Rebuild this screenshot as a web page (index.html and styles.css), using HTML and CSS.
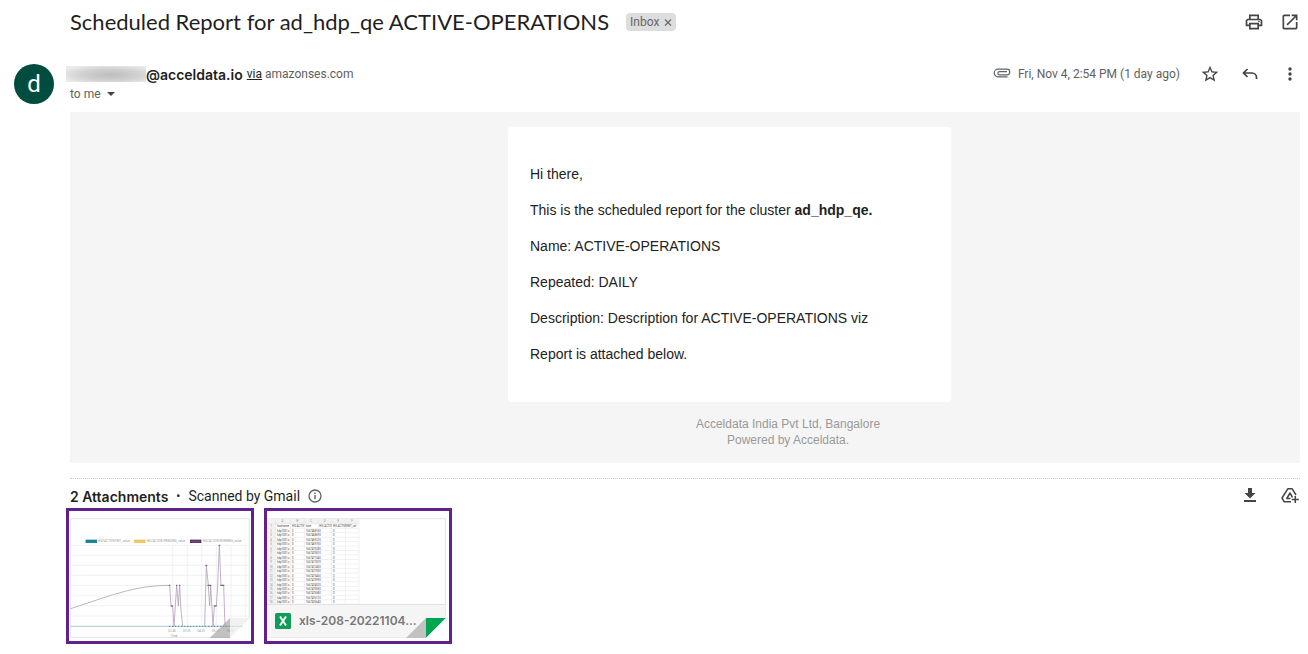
FILE: index.html
```html
<!DOCTYPE html>
<html lang="en">
<head>
    <meta charset="UTF-8">
    <meta name="viewport" content="width=device-width, initial-scale=1.0">
    <title>Scheduled Report for ad_hdp_qe ACTIVE-OPERATIONS</title>
    <link rel="stylesheet" href="styles.css">
</head>
<body>
    <main class="mail">
        <!-- Subject line -->
        <div class="subject-row">
            <h1 class="subject">Scheduled Report for ad_hdp_qe ACTIVE-OPERATIONS</h1>
            <span class="chip">Inbox
                <button class="chip-remove" aria-label="Remove label Inbox">
                    <svg width="8" height="8" viewBox="0 0 8 8"><path d="M1 1.500l6 6M7 1.500l-6 6" stroke="#666" stroke-width="1.100" fill="none"/></svg>
                </button>
            </span>
            <div class="actions subject-actions">
                <button class="icon-button" aria-label="Print all">
                    <svg width="20" height="20" viewBox="0 0 24 24"><path d="M19 8h-1V3H6v5H5c-1.660 0-3 1.340-3 3v6h4v4h12v-4h4v-6c0-1.660-1.340-3-3-3zM8 5h8v3H8V5zm8 14H8v-4h8v4zm4-4h-2v-2H6v2H4v-4c0-.550.450-1 1-1h14c.550 0 1 .450 1 1v4z"/><circle cx="18" cy="11.500" r="1"/></svg>
                </button>
                <button class="icon-button" aria-label="In new window">
                    <svg width="20" height="20" viewBox="0 0 24 24"><path d="M19 19H5V5h7V3H5c-1.110 0-2 .900-2 2v14c0 1.100.890 2 2 2h14c1.100 0 2-.900 2-2v-7h-2v7zM14 3v2h3.590l-9.830 9.830 1.410 1.410L19 6.410V10h2V3h-7z"/></svg>
                </button>
            </div>
        </div>

        <!-- Sender and date -->
        <header class="sender-row">
            <div class="avatar">d</div>
            <div class="sender">
                <div class="sender-line">
                    <span class="redacted"></span><strong class="address">@acceldata.io</strong>
                    <span class="via"><a href="#">via</a> amazonses.com</span>
                </div>
                <button class="recipient">to me
                    <svg width="8" height="4" viewBox="0 0 8 4"><path d="M0 0h8L4 4z"/></svg>
                </button>
            </div>
            <div class="date-box">
                <svg width="18" height="18" viewBox="0 0 18 18" fill="none" stroke="#5f6368" stroke-width="1.200"><path d="M14.500 11.800H5A3.800 3.800 0 0 1 5 4.200h9a2.700 2.700 0 0 1 0 5.600H6.500a1.600 1.600 0 0 1 0-3.200H14"/></svg>
                <span>Fri, Nov 4, 2:54 PM (1 day ago)</span>
            </div>
            <div class="actions sender-actions">
                <button class="icon-button" aria-label="Star">
                    <svg width="20" height="20" viewBox="0 0 24 24"><path d="M22 9.240l-7.190-.620L12 2 9.190 8.630 2 9.240l5.460 4.730L5.820 21 12 17.270 18.180 21l-1.630-7.030L22 9.240zM12 15.400l-3.760 2.270 1-4.280-3.320-2.880 4.380-.380L12 6.100l1.710 4.040 4.380.380-3.320 2.880 1 4.280L12 15.400z"/></svg>
                </button>
                <button class="icon-button" aria-label="Reply">
                    <svg width="20" height="20" viewBox="0 0 20 20" fill="none" stroke="#444" stroke-width="1.700"><path d="M7.500 5L3.500 9l4 4M3.500 9H12a4.500 4.500 0 0 1 4.500 4.500V15"/></svg>
                </button>
                <button class="icon-button" aria-label="More">
                    <svg width="20" height="20" viewBox="0 0 20 20"><circle cx="10" cy="5" r="1.700"/><circle cx="10" cy="10" r="1.700"/><circle cx="10" cy="15" r="1.700"/></svg>
                </button>
            </div>
        </header>

        <!-- Message -->
        <section class="message">
            <div class="card">
                <p>Hi there,</p>
                <p>This is the scheduled report for the cluster <b>ad_hdp_qe.</b></p>
                <p>Name: ACTIVE-OPERATIONS</p>
                <p>Repeated: DAILY</p>
                <p>Description: Description for ACTIVE-OPERATIONS viz</p>
                <p>Report is attached below.</p>
            </div>
            <footer class="message-footer">Acceldata India Pvt Ltd, Bangalore<br>Powered by Acceldata.</footer>
        </section>

        <!-- Attachments -->
        <section class="attachments">
            <div class="attachments-head">
                <h2>2 Attachments</h2>
                <span class="dot">•</span>
                <span>Scanned by Gmail</span>
                <svg class="info" width="14" height="14" viewBox="0 0 14 14"><circle cx="7" cy="7" r="6" fill="none" stroke="#5f6368" stroke-width="1.300"/><path d="M6.300 6h1.400v4.200H6.300zM6.300 3.600h1.400V5H6.300z" fill="#5f6368"/></svg>
                <div class="actions sender-actions">
                    <button class="icon-button" aria-label="Download all attachments">
                        <svg width="20" height="20" viewBox="0 0 20 20"><path d="M8 2h4v5h3.500L10 12.500 4.500 7H8zM4 14h12v2H4z"/></svg>
                    </button>
                    <button class="icon-button" aria-label="Add all to Drive">
                        <svg width="20" height="20" viewBox="0 0 20 20" fill="none" stroke="#444" stroke-width="1.500" stroke-linejoin="round"><path d="M11 15.800H4.200L2 12 7.800 2.800h4.400L16 9M10.500 12.500H6.800L10 7l2.500 4.300M15.300 10v7M11.800 13.500h7"/></svg>
                    </button>
                </div>
            </div>
            <div class="tiles">
                <a class="tile" href="#" aria-label="Chart attachment">
                    <svg class="preview" viewBox="15 18 546 390">
                        <rect x="20" y="41" width="536" height="356" fill="#fff" stroke="#e3e3e3" stroke-width="3"/>
                        <path d="M20 121H556M20 151H556M20 181H556M20 211H556M20 241H556M20 272H556M20 302H556M20 333H556M326 121V370M370 121V370M413 121V370M457 121V370M501 121V370M545 121V370" stroke="#ececf0" stroke-width="2"/>
                        <rect x="66" y="105" width="32" height="8" fill="#1687a0" stroke="#08758f" stroke-width="2"/>
                        <rect x="211" y="105" width="32" height="8" fill="#f4c568" stroke="#edbb58" stroke-width="2"/>
                        <rect x="379" y="105" width="32" height="8" fill="#74477b" stroke="#42164d" stroke-width="2"/>
                        <g class="chart-text">
                            <text x="103" y="112">HSI/ACTIVE/INIT_value</text>
                            <text x="248" y="112">HSI/ACTIVE/PENDING_value</text>
                            <text x="416" y="112">HSI/ACTIVE/RUNNING_value</text>
                            <text x="313" y="381">02:45</text><text x="357" y="381">03:35</text>
                            <text x="400" y="381">04:25</text><text x="444" y="381">05:15</text>
                            <text x="488" y="381">06:05</text><text x="320" y="397">Time</text>
                        </g>
                        <path d="M20 311L110 281Q190 254 245 246Q280 241 317 241L321 303H326L330 364L338 241L343 303L347 241L350 303L356 364M422 364L427 181L433 241L437 303L440 241L447 364L451 303H457L461 241L466 121L471 241H479L483 364" fill="none" stroke="#b5a1b9" stroke-width="2.500"/>
                        <path d="M315 241h4M320 303h7M336 241h4M345 241h4M424 181h6M430 241h12M449 303h9M469 241h12M464 121h5" stroke="#685070" stroke-width="3"/>
                        <path d="M20 364H540" stroke="#7fb5bd" stroke-width="2"/>
                        <path d="M315 364H540" stroke="#5b8590" stroke-width="3" stroke-dasharray="4 5"/>
                        <path d="M437 399L498 339V399z" fill="#999" opacity=".6"/>
                        <path d="M498 339H558L498 399z" fill="#eee" opacity=".75"/>
                        <path d="M558 340V400H498z" fill="#fff"/>
                    </svg>
                </a>
                <a class="tile" href="#">
                    <svg class="preview" viewBox="21 18 546 390">
                        <rect x="22" y="41" width="534" height="356" fill="#fff" stroke="#e3e3e3" stroke-width="3"/>
                        <rect x="21" y="41" width="276" height="16" fill="#f2f2f2"/>
                        <rect x="21" y="41" width="26" height="257" fill="#f2f2f2"/>
                        <g id="sheet" class="sheet-text"></g>
                        <rect x="21" y="298" width="535" height="99" fill="#f5f5f5"/>
                        <path d="M21 298H556" stroke="#dedede" stroke-width="3"/>
                    </svg>
                    <span class="file">
                        <svg width="16" height="16" viewBox="0 0 16 16"><rect width="16" height="16" rx="1.500" fill="#0f9d58"/><path d="M5 3.500l6 9M11 3.500l-6 9" stroke="#fff" stroke-width="1.900"/></svg>
                        <span class="file-name">xls-208-20221104...</span>
                    </span>
                    <svg class="fold" width="40" height="20" viewBox="0 0 40 20"><path d="M0 20L20 0V20z" fill="#c2c2c2"/><path d="M20 0H40L20 20z" fill="#00a651"/><path d="M40 0V20H20z" fill="#fff"/></svg>
                </a>
            </div>
        </section>
    </main>

    <script>
        // Fill in the spreadsheet preview
        const columns = [47, 92, 133, 174, 215, 256, 297];
        let cells = '';
        let lines = '';
        for (let c = 0; c < 6; c++) {
            cells += '<text x="' + (columns[c] + 20) + '" y="52">' + 'ABCDEF'[c] + '</text>';
        }
        for (const x of columns) {
            lines += 'M' + x + ' 41V298';
        }
        for (let row = 1; row <= 18; row++) {
            const y = 54 + row * 13.4;
            lines += 'M21 ' + (y - 11) + 'H297';
            cells += '<text x="33" y="' + y + '">' + row + '</text>';
            const values = row === 1
                ? ['hostname', 'HSI ACTIV', 'time', 'HSI ACTIV', 'HSI ACTIVE', 'INIT_val']
                : ['hdp1001.c', '0', '16674' + (6710 + row * 53), '0', '0', ''];
            for (let c = 0; c < 6; c++) {
                cells += '<text class="value" x="' + (columns[c] + 4) + '" y="' + y + '">' + values[c] + '</text>';
            }
        }
        document.getElementById('sheet').innerHTML = '<path d="' + lines + '" stroke="#e2e2e2" stroke-width="1.5"/>' + cells;
    </script>
</body>
</html>
```
FILE: styles.css
```css
* {
    box-sizing: border-box;
}

body {
    margin: 0;
    background-color: white;
    color: #1f1f1f;
    font-family: Roboto, sans-serif;
    font-size: 12px;
}

button {
    border: 0;
    padding: 0;
    background: none;
    font: inherit;
    color: inherit;
    cursor: pointer;
}

svg {
    display: block;
}

.mail {
    padding: 0 8px 8px 14px;
}

/* Subject line */
.subject-row {
    display: flex;
    align-items: center;
    height: 44px;
    padding-left: 56px;
}

.subject {
    margin: 0;
    font-family: Lato, sans-serif;
    font-size: 22px;
    font-weight: 400;
    line-height: 28px;
}

.chip {
    display: flex;
    align-items: center;
    gap: 5px;
    height: 18px;
    margin-left: 17px;
    padding: 0 4px;
    border-radius: 4px;
    background-color: #ddd;
    color: #666;
}

.actions {
    display: flex;
    margin-left: auto;
}

.subject-actions {
    gap: 16px;
}

.sender-actions {
    gap: 20px;
}

.icon-button {
    width: 20px;
    height: 20px;
    fill: #444;
}

/* Sender and date */
.sender-row {
    display: flex;
    padding: 20px 0 8px;
    color: #5e5e5e;
}

.avatar {
    width: 40px;
    height: 40px;
    border-radius: 50%;
    background-color: #004d40;
    color: white;
    font-size: 24px;
    line-height: 40px;
    text-align: center;
}

.sender {
    margin-left: 12px;
}

.sender-line {
    display: flex;
    align-items: center;
    height: 20px;
}

.redacted {
    width: 80px;
    height: 16px;
    background: radial-gradient(ellipse at 55% 55%, #bdbdbd, #d0d0d0 45%, #ebebeb 85%);
}

.address {
    color: #1f1f1f;
    font-family: Inter, sans-serif;
    font-size: 14px;
    font-weight: 600;
}

.via {
    margin-left: 4px;
}

.via a {
    color: #222;
}

.recipient {
    display: flex;
    align-items: center;
    gap: 6px;
    height: 20px;
    margin-left: 4px;
    fill: #444;
}

.date-box {
    display: flex;
    align-items: center;
    gap: 7px;
    height: 20px;
    margin-left: auto;
}

.sender-row .actions {
    margin-left: 20px;
}

/* Message */
.message {
    margin-left: 56px;
    padding: 15px 0 15px 89px;
    background-color: #f5f5f5;
    font-family: "Liberation Sans", Arial, sans-serif;
}

.card {
    max-width: 443px;
    margin: 0 auto;
    padding: 37px 22px 38px;
    border-radius: 3px;
    background-color: white;
    color: #222;
    font-size: 14px;
    line-height: 20px;
}

.card p {
    margin: 0 0 16px;
}

.card p:last-child {
    margin-bottom: 0;
}

.message-footer {
    padding: 14px 0 0 117px;
    color: #999;
    line-height: 16px;
    text-align: center;
}

/* Attachments */
.attachments {
    margin: 15px 0 0 56px;
    border-top: 1px dotted #ccc;
}

.attachments-head {
    display: flex;
    align-items: center;
    height: 29px;
    padding-top: 5px;
    font-size: 14px;
}

.attachments-head h2 {
    margin: 0;
    font-family: Inter, sans-serif;
    font-size: 14px;
    font-weight: 600;
}

.dot {
    margin: 0 8px;
    font-size: 12px;
}

.info {
    margin-left: 8px;
}

.tiles {
    display: flex;
    gap: 10px;
    margin-left: -4px;
}

.tile {
    position: relative;
    width: 188px;
    height: 136px;
    border: 3px solid #62208c;
    color: #777;
    text-decoration: none;
}

.preview {
    width: 100%;
    height: 100%;
}

.chart-text {
    fill: #999;
    font-size: 9px;
}

.sheet-text {
    fill: #888;
    font-size: 8px;
    text-anchor: middle;
}

.sheet-text .value {
    fill: #444;
    text-anchor: start;
}

/* File name laid over the preview */
.file {
    position: absolute;
    right: 4px;
    bottom: 12px;
    left: 8px;
    display: flex;
    align-items: center;
    gap: 8px;
}

.file-name {
    font-family: Inter, sans-serif;
    font-size: 12px;
    font-weight: 600;
    line-height: 16px;
}

.fold {
    position: absolute;
    right: 3px;
    bottom: 3px;
}
```
